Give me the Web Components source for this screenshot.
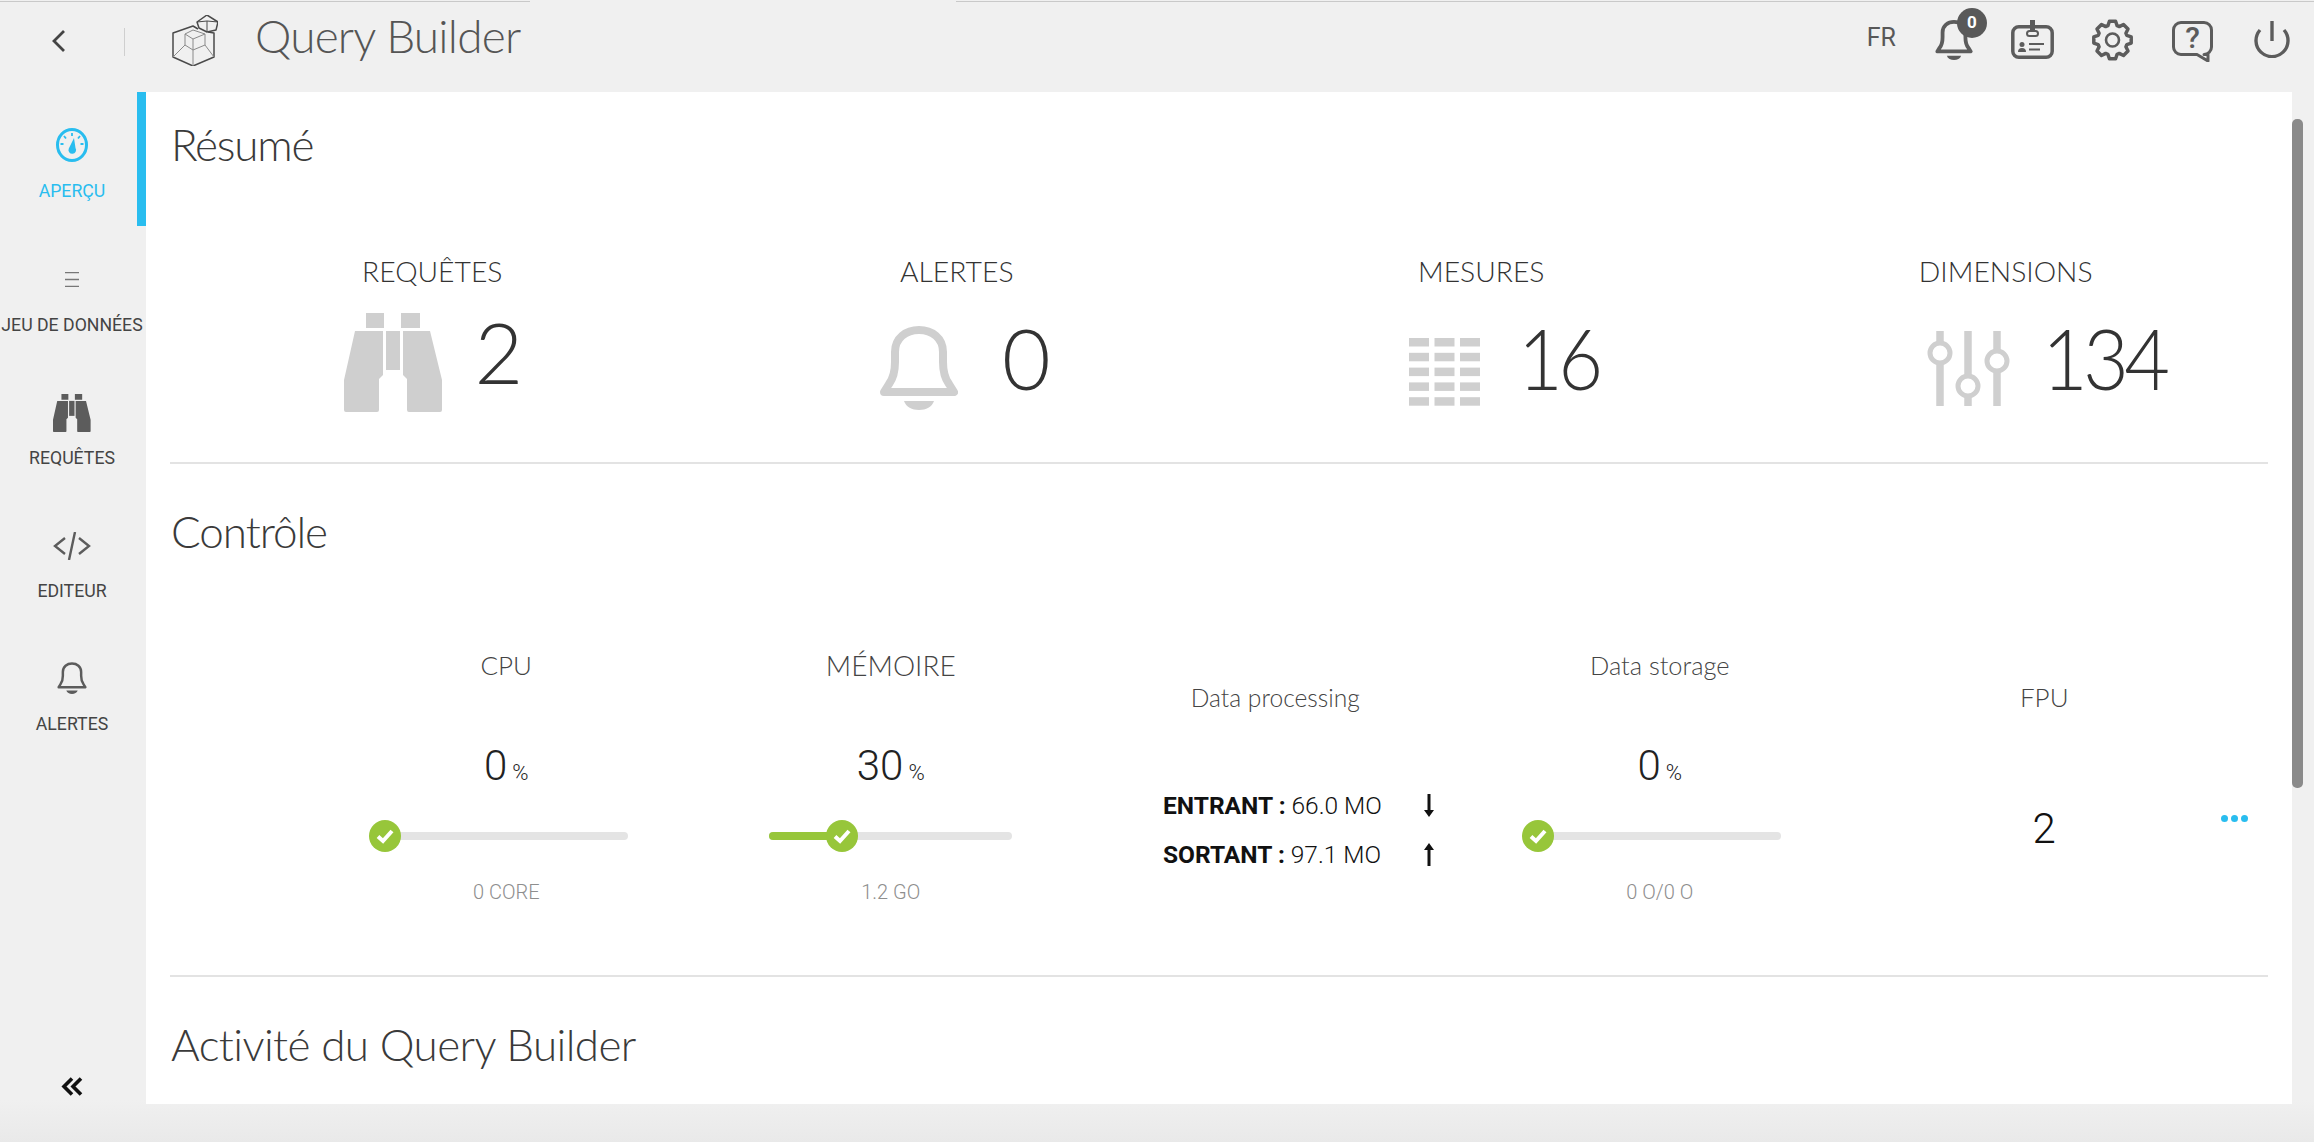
<!DOCTYPE html>
<html lang="fr">
<head>
<meta charset="utf-8">
<title>Query Builder</title>
<style>
  html, body { margin: 0; height: 1142px; overflow: hidden; }
  body { background: linear-gradient(to bottom, #f0f0f0 1100px, #e9e9e9 1142px); font-family: Roboto, sans-serif; }
</style>
</head>
<body>
<app-shell>
  <top-bar slot="top"></top-bar>
  <side-nav slot="side">
    <nav-item active icon="gauge" label="APERÇU"></nav-item>
    <nav-item icon="menu" label="JEU DE DONNÉES"></nav-item>
    <nav-item icon="binoculars" label="REQUÊTES" nudge="1"></nav-item>
    <nav-item icon="code" label="EDITEUR" nudge="2"></nav-item>
    <nav-item icon="bell" label="ALERTES"></nav-item>
  </side-nav>
  <main-panel slot="main">
    <section-title style="margin-top:24px; letter-spacing:-1.2px">Résumé</section-title>
    <kpi-row>
      <kpi-card label="REQUÊTES" value="2" icon="binoculars" shift="3" gap="31" icon-top="7" num-top="4"></kpi-card>
      <kpi-card label="ALERTES" value="0" icon="bell" shift="17" gap="44" icon-top="20" num-top="10"></kpi-card>
      <kpi-card label="MESURES" value="16" icon="table" shift="52" gap="38" tight="5" squeeze=".92" icon-top="32" num-top="10"></kpi-card>
      <kpi-card label="DIMENSIONS" value="134" icon="sliders" shift="87" gap="32" tight="5" squeeze=".94" icon-top="25" num-top="10"></kpi-card>
    </kpi-row>
    <section-rule></section-rule>
    <section-title style="margin-top:39px; letter-spacing:-1.05px">Contrôle</section-title>
    <control-row>
      <gauge-card label="CPU" value="0" pct="0" sub="0 CORE"></gauge-card>
      <gauge-card label="MÉMOIRE" label-size="28" value="30" pct="30" sub="1.2 GO"></gauge-card>
      <flow-card label="Data processing" in="66.0 MO" out="97.1 MO"></flow-card>
      <gauge-card label="Data storage" label-size="25.400" value="0" pct="0" sub="0 O/0 O"></gauge-card>
      <fpu-card label="FPU" value="2"></fpu-card>
    </control-row>
    <section-rule></section-rule>
    <section-title style="margin-top:39px; letter-spacing:-.6px">Activité du Query Builder</section-title>
  </main-panel>
</app-shell>

<script>
const HEAD_FONT = "Lato, 'Noto Sans', sans-serif"

const tableRects = () => {
    let out = ''
    for (let r = 0; r < 5; r++) {
        for (let c = 0; c < 3; c++) {
            out += `<rect x="${c * 25.5}" y="${r * 14.8}" width="20" height="8.5"/>`
        }
    }
    return out
}

const gearPath = () => {
    // 8 dents autour du centre
    let pts = []
    const cx = 20.5, cy = 21
    for (let i = 0; i < 8; i++) {
        const a = (i * 45 - 90) * Math.PI / 180
        const step = Math.PI / 8
        const p = (r, d) => `${(cx + r * Math.cos(a + d)).toFixed(1)} ${(cy + r * Math.sin(a + d)).toFixed(1)}`
        pts.push(p(19, -step * 0.42), p(19, step * 0.42), p(15, step * 0.8), p(15, step * 1.2))
    }
    return 'M' + pts.join('L') + 'Z'
}

const ICONS = {
    binoculars: (w, h, c) => `<svg width="${w}" height="${h}" viewBox="0 0 99 99" fill="${c}">
      <rect x="22" width="18" height="15"/><rect x="57" width="19" height="15"/>
      <path d="M11 18H39V62L35 66V97a2 2 0 0 1-2 2H2a2 2 0 0 1-2-2V67Z"/>
      <rect x="42" y="18" width="14" height="39"/>
      <path d="M59 18H86L98 67V97a2 2 0 0 1-2 2H65a2 2 0 0 1-2-2V66L59 62Z"/></svg>`,
    bell: (w, h, c, sw = 8) => `<svg width="${w}" height="${h}" viewBox="0 0 78 84" fill="none">
      <path d="M4 66L9 58Q15 50 15 36V26C15 12 26 4 39 4S63 12 63 26V36Q63 50 69 58L74 66Z" stroke="${c}" stroke-width="${sw}" stroke-linejoin="round"/>
      <path d="M24 75H54C52 81 46 84 39 84S26 81 24 75Z" fill="${c}"/></svg>`,
    table: (w, h, c) => `<svg width="${w}" height="${h}" viewBox="0 0 71 68" fill="${c}">${tableRects()}</svg>`,
    sliders: (w, h, c) => `<svg width="${w}" height="${h}" viewBox="0 0 84 75" fill="#fff" stroke="${c}">
      <path d="M14 0V75M42 0V75M71 0V75" stroke-width="7.5"/>
      <circle cx="14" cy="22" r="10" stroke-width="5"/><circle cx="42" cy="55" r="10" stroke-width="5"/><circle cx="71" cy="30" r="10" stroke-width="5"/></svg>`,
    gauge: (w, h, c) => `<svg width="${w}" height="${h}" viewBox="0 0 32 34" fill="none" stroke="${c}">
      <ellipse cx="16" cy="17" rx="14.5" ry="15.5" stroke-width="3"/>
      <path d="M16 5V8M8 8L10 10.500M24 8L22 10.500M4.500 16H7.500M24.500 16H27.500" stroke-width="1.800"/>
      <path d="M18 10L19.500 20A3.800 3.800 0 1 1 12.800 20.500Z" fill="${c}" stroke="none"/></svg>`,
    menu: (w, h, c) => `<svg width="${w}" height="${h}" viewBox="0 0 14 15" stroke="${c}" stroke-width="1.300"><path d="M0 .7H14M0 7.500H14M0 14.300H14"/></svg>`,
    code: (w, h, c) => `<svg width="${w}" height="${h}" viewBox="0 0 38 28" fill="none" stroke="${c}" stroke-width="2.400">
      <path d="M12 6L2 14L12 22M26 6L36 14L26 22M22 0L16 28"/></svg>`
}

class AppShell extends HTMLElement {
    constructor() {
        super()
        this.attachShadow({ mode: 'open' }).innerHTML = /*html*/`
        <style>
          :host { display: grid; grid-template-columns: 146px 1fr; grid-template-rows: 92px 1012px; height: 1142px; }
          .top { grid-column: 1 / 3; }
          .bar { display: flex; }
          .track { width: 22px; display: flex; padding-top: 27px; box-sizing: border-box; }
          .thumb { width: 11px; height: 669px; background: #8a8a8a; border-radius: 5px; }
          .side { grid-row: 2 / 4; }
        </style>
        <div class="top"><slot name="top"></slot></div>
        <div class="side"><slot name="side"></slot></div>
        <div class="bar">
          <slot name="main"></slot>
          <div class="track"><div class="thumb"></div></div>
        </div>`
    }
}

class TopBar extends HTMLElement {
    constructor() {
        super()
        const ic = '#5c5c5c'
        this.attachShadow({ mode: 'open' }).innerHTML = /*html*/`
        <style>
          :host {
            display: flex; align-items: flex-start; height: 92px; position: relative;
            background: linear-gradient(90deg, #c9c9c9 530px, transparent 530px, transparent 956px, #c9c9c9 956px) 0 1px / 100% 1px no-repeat;
          }
          .back { margin: 30px 0 0 52px; }
          .sep { width: 1px; height: 28px; background: #cfcfcf; margin: 28px 0 0 59px; }
          .logo { margin: 15px 0 0 47px; }
          .title { margin: 8px 0 0 37px; font: 300 46px/56px ${HEAD_FONT}; color: #555; letter-spacing: -.8px; white-space: nowrap; }
          .right { margin-left: auto; display: flex; align-items: flex-start; }
          .fr { font: 400 25px/30px Roboto, sans-serif; color: #585858; margin: 23px 0 0 0; }
          .bell { margin: 20px 0 0 39px; position: relative; width: 38px; height: 40px; }
          .badge {
            position: absolute; left: 22px; top: -12px; width: 30px; height: 30px; border-radius: 50%;
            background: #595959; color: #fff; font: 700 17px/28px Roboto, sans-serif; text-align: center;
          }
          svg { display: block; }
          .card { margin: 20px 0 0 38px; }
          .gear { margin: 19px 0 0 38px; }
          .help { margin: 21px 0 0 39px; position: relative; }
          .q { position: absolute; left: 0; top: 1px; width: 41px; text-align: center; font: 500 30px/32px Roboto, sans-serif; color: ${ic}; }
          .power { margin: 21px 24px 0 41px; }
        </style>
        <svg class="back" width="13" height="22" viewBox="0 0 13 22" fill="none" stroke="#444" stroke-width="2.800"><path d="M12 1L2 11L12 21"/></svg>
        <div class="sep"></div>
        <svg class="logo" width="46" height="51" viewBox="0 0 46 51" fill="none" stroke="#4a4a4a" stroke-width="1.500" stroke-linejoin="round">
          <path d="M26 14L21 11L1 18V42L21 51L42 42V18L36 17"/>
          <path d="M25 7L35 0L46 7L44 15L35 17L27 13Z"/><path d="M25 7L35 6L46 7M35 6V17" stroke-width="1"/>
          <path d="M13 19L21 15L33 19V30L21 35L13 30ZM13 19L21 24L33 19M21 24V35M21 35V51M1 42L13 30M42 42L33 30" stroke="#8a8a8a" stroke-width="1"/>
        </svg>
        <div class="title">Query Builder</div>
        <div class="right">
          <div class="fr">FR</div>
          <div class="bell">${ICONS.bell(38, 40, ic)}<div class="badge">0</div></div>
          <svg class="card" width="43" height="39" viewBox="0 0 43 39" fill="none" stroke="${ic}">
            <rect x="1.800" y="6.800" width="39.400" height="30.400" rx="6" stroke-width="3.500"/>
            <path d="M21.500 0V12" stroke-width="5"/><rect x="16" y="11" width="11" height="5" rx="2.500" stroke-width="2"/>
            <path d="M18 24H33M18 29.500H29" stroke-width="2"/>
            <circle cx="11" cy="24.500" r="2.500" fill="${ic}" stroke="none"/><path d="M7 32Q7 28 11 28T15 32Z" fill="${ic}" stroke="none"/>
          </svg>
          <svg class="gear" width="41" height="42" viewBox="0 0 41 42" fill="none" stroke="${ic}">
            <path d="${gearPath()}" stroke-width="3.500" stroke-linejoin="round"/>
            <circle cx="20.500" cy="21" r="6.500" stroke-width="2.600"/>
          </svg>
          <div class="help">
            <svg width="41" height="41" viewBox="0 0 41 41" fill="none" stroke="${ic}" stroke-width="3" stroke-linejoin="round">
              <path d="M9 1.500H32A7.500 7.500 0 0 1 39.500 9V26A7.500 7.500 0 0 1 32 33.500H36V40L25 33.500H9A7.500 7.500 0 0 1 1.500 26V9A7.500 7.500 0 0 1 9 1.500Z"/>
            </svg>
            <div class="q">?</div>
          </div>
          <svg class="power" width="36" height="37" viewBox="0 0 36 37" fill="none" stroke="${ic}" stroke-width="3.400">
            <path d="M18 0V20"/><path d="M6 9A16 16 0 1 0 30 9"/>
          </svg>
        </div>`
    }
}

class SideNav extends HTMLElement {
    constructor() {
        super()
        this.attachShadow({ mode: 'open' }).innerHTML = /*html*/`
        <style>
          :host { display: flex; flex-direction: column; height: 1050px; width: 146px; }
          .list { display: flex; flex-direction: column; }
          .collapse { margin: auto 0 46px 61px; display: block; }
        </style>
        <div class="list"><slot></slot></div>
        <svg class="collapse" width="22" height="19" viewBox="0 0 22 19" fill="none" stroke="#111" stroke-width="3.600"><path d="M11 1.500L3 9.500L11 17.500M20 1.500L12 9.500L20 17.500"/></svg>`
    }
}

class NavItem extends HTMLElement {
    connectedCallback() {
        const on = this.hasAttribute('active')
        const name = this.getAttribute('icon')
        const sizes = { gauge: [32, 34], menu: [14, 15], binoculars: [38, 38], code: [38, 28], bell: [30, 32] }
        const [w, h] = sizes[name]
        const colour = on ? '#29bdef' : (name == 'menu' ? '#777' : '#5c5c5c')
        const nudge = Number(this.getAttribute('nudge') || 0)
        const shadow = this.attachShadow({ mode: 'open' })
        shadow.innerHTML = /*html*/`
        <style>
          :host { display: block; height: 133px; box-sizing: border-box; padding: 18px 2px 0 0; }
          :host([active]) { height: 134px; box-shadow: inset -9px 0 0 #29bdef; }
          .icon { height: ${70 - nudge}px; padding-top: ${nudge}px; display: flex; align-items: center; justify-content: center; }
          .label { font: 400 17.700px/22px Roboto, sans-serif; text-align: center; white-space: nowrap; color: ${on ? '#29bdef' : '#444'}; }
        </style>
        <div class="icon">${ICONS[name](w, h, colour, name == 'bell' ? 6.500 : undefined)}</div>
        <div class="label">${this.getAttribute('label')}</div>`
    }
}

class MainPanel extends HTMLElement {
    constructor() {
        super()
        this.attachShadow({ mode: 'open' }).innerHTML = /*html*/`
        <style>
          :host { display: block; width: 2146px; height: 1012px; box-sizing: border-box; padding: 0 24px; background: #fff; overflow: hidden; }
        </style>
        <slot></slot>`
    }
}

class SectionTitle extends HTMLElement {
    constructor() {
        super()
        this.attachShadow({ mode: 'open' }).innerHTML = /*html*/`
        <style>
          :host { display: block; height: 60px; font: 300 44px/57px ${HEAD_FONT}; color: #3a3a3a; padding-left: 1px; white-space: nowrap; }
        </style>
        <slot></slot>`
    }
}

class SectionRule extends HTMLElement {
    constructor() {
        super()
        this.attachShadow({ mode: 'open' }).innerHTML = `<style>:host { display: block; height: 2px; background: #e3e3e3; }</style>`
    }
}

class KpiRow extends HTMLElement {
    constructor() {
        super()
        this.attachShadow({ mode: 'open' }).innerHTML = /*html*/`
        <style>
          :host { display: grid; grid-template-columns: repeat(4, 1fr); margin: 80px 0 46px; }
        </style>
        <slot></slot>`
    }
}

class KpiCard extends HTMLElement {
    connectedCallback() {
        const name = this.getAttribute('icon')
        const sizes = { binoculars: [99, 99], bell: [78, 84], table: [71, 68], sliders: [84, 75] }
        const [w, h] = sizes[name]
        this.attachShadow({ mode: 'open' }).innerHTML = /*html*/`
        <style>
          :host { display: flex; flex-direction: column; align-items: center; }
          .label { font: 300 28.300px/30px ${HEAD_FONT}; color: #333; height: 30px; white-space: nowrap; }
          .row { display: flex; gap: ${this.getAttribute('gap')}px; height: 110px; margin-top: 20px; padding-left: ${this.getAttribute('shift')}px; align-items: flex-start; }
          .icon { margin-top: ${this.getAttribute('icon-top')}px; }
          .icon svg { display: block; }
          .num {
            margin-top: ${this.getAttribute('num-top')}px; font: 300 84px/84px ${HEAD_FONT}; color: #333;
            letter-spacing: -${this.getAttribute('tight') || 0}px;
            transform: scaleX(${this.getAttribute('squeeze') || 1}); transform-origin: left center;
          }
        </style>
        <div class="label">${this.getAttribute('label')}</div>
        <div class="row">
          <div class="icon">${ICONS[name](w, h, '#cfcfcf')}</div>
          <div class="num">${this.getAttribute('value')}</div>
        </div>`
    }
}

class ControlRow extends HTMLElement {
    constructor() {
        super()
        this.attachShadow({ mode: 'open' }).innerHTML = /*html*/`
        <style>
          :host { display: grid; grid-template-columns: repeat(5, 384.5px); margin-top: 77px; padding: 0 0 71px 144px; height: 335px; box-sizing: border-box; position: relative; }
          .dots { position: absolute; right: 20px; top: 175px; display: flex; gap: 3px; }
          .dots i { width: 7px; height: 7px; border-radius: 50%; background: #29bdef; }
        </style>
        <slot></slot>
        <div class="dots"><i></i><i></i><i></i></div>`
    }
}

class GaugeCard extends HTMLElement {
    connectedCallback() {
        const pct = Number(this.getAttribute('pct'))
        this.attachShadow({ mode: 'open' }).innerHTML = /*html*/`
        <style>
          :host { display: flex; flex-direction: column; align-items: center; padding-top: 10px; }
          .label { font: 300 ${this.getAttribute('label-size') || 26}px/30px ${HEAD_FONT}; color: #444; height: 30px; white-space: nowrap; }
          .value { margin-top: 56px; height: 59px; font: 300 42px/60px Roboto, sans-serif; color: #222; white-space: nowrap; }
          .value small { font-size: 22px; margin-left: 5px; }
          .track { margin-top: 25px; width: 243px; height: 32px; display: flex; align-items: center; position: relative; }
          .bar { flex: 1; height: 8px; border-radius: 4px; background: #e4e4e4; }
          .fill { height: 8px; border-radius: 4px; background: #97c63a; width: ${pct}%; }
          .thumb { position: absolute; left: calc(${pct}% - 16px); top: 0; width: 32px; height: 32px; border-radius: 50%; background: #97c63a; }
          .thumb svg { display: block; }
          .sub { margin-top: 28px; height: 24px; font: 300 20px/24px Roboto, sans-serif; color: #8e8e8e; white-space: nowrap; }
        </style>
        <div class="label">${this.getAttribute('label')}</div>
        <div class="value">${this.getAttribute('value')}<small>%</small></div>
        <div class="track">
          <div class="bar"><div class="fill"></div></div>
          <div class="thumb"><svg width="32" height="32" viewBox="0 0 32 32" fill="none" stroke="#fff" stroke-width="4"><path d="M9 16.500L14 21L23 11"/></svg></div>
        </div>
        <div class="sub">${this.getAttribute('sub')}</div>`
    }
}

class FlowCard extends HTMLElement {
    connectedCallback() {
        const arrow = (d) => `<svg width="12" height="23" viewBox="0 0 12 23" fill="#111"><path d="${d}"/></svg>`
        this.attachShadow({ mode: 'open' }).innerHTML = /*html*/`
        <style>
          :host { display: flex; flex-direction: column; padding-top: 43px; }
          .label { font: 300 24.600px/30px ${HEAD_FONT}; color: #444; text-align: center; height: 30px; white-space: nowrap; }
          .rows { margin-top: 68px; padding-left: 80px; }
          .row { display: flex; align-items: center; height: 49px; }
          .txt { width: 260px; font: 300 24.500px/30px Roboto, sans-serif; color: #111; white-space: nowrap; }
          b { font-weight: 700; }
        </style>
        <div class="label">${this.getAttribute('label')}</div>
        <div class="rows">
          <div class="row"><div class="txt"><b>ENTRANT :</b> ${this.getAttribute('in')}</div>${arrow('M4.500 0H7.500V16H11L6 23L1 16H4.500Z')}</div>
          <div class="row"><div class="txt"><b>SORTANT :</b> ${this.getAttribute('out')}</div>${arrow('M4.500 23H7.500V7H11L6 0L1 7H4.500Z')}</div>
        </div>`
    }
}

class FpuCard extends HTMLElement {
    connectedCallback() {
        this.attachShadow({ mode: 'open' }).innerHTML = /*html*/`
        <style>
          :host { display: flex; flex-direction: column; align-items: center; padding-top: 42px; }
          .label { font: 300 26px/30px ${HEAD_FONT}; color: #444; height: 30px; }
          .value { margin-top: 87px; font: 300 42px/60px Roboto, sans-serif; color: #111; }
        </style>
        <div class="label">${this.getAttribute('label')}</div>
        <div class="value">${this.getAttribute('value')}</div>`
    }
}

customElements.define('app-shell', AppShell)
customElements.define('top-bar', TopBar)
customElements.define('side-nav', SideNav)
customElements.define('nav-item', NavItem)
customElements.define('main-panel', MainPanel)
customElements.define('section-title', SectionTitle)
customElements.define('section-rule', SectionRule)
customElements.define('kpi-row', KpiRow)
customElements.define('kpi-card', KpiCard)
customElements.define('control-row', ControlRow)
customElements.define('gauge-card', GaugeCard)
customElements.define('flow-card', FlowCard)
customElements.define('fpu-card', FpuCard)
</script>
</body>
</html>
